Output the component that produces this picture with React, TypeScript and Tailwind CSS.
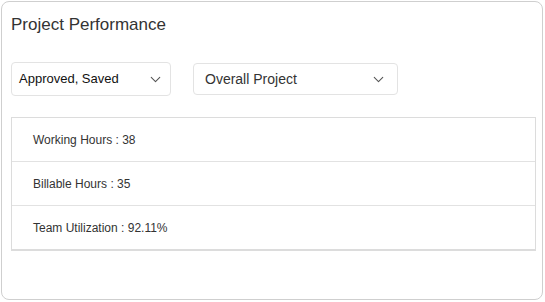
import { ChevronDown } from "lucide-react";

type Metric = { label: string; value: string };

const METRICS: Metric[] = [
	{ label: "Working Hours", value: "38" },
	{ label: "Billable Hours", value: "35" },
	{ label: "Team Utilization", value: "92.11%" },
];

function Dropdown({
	text,
	className,
	textClassName,
}: {
	text: string;
	className: string;
	textClassName: string;
}) {
	return (
		<div
			className={`flex items-center justify-between rounded-[4px] border border-[#e3e3e3] bg-white ${className}`}
		>
			<span className={textClassName}>{text}</span>
			<ChevronDown size={17} strokeWidth={1.5} className="text-[#555]" />
		</div>
	);
}

export default function App() {
	return (
		<div
			className="h-[302px] w-[545px] bg-white p-[1px]"
			style={{ fontFamily: '"Liberation Sans", Arial, sans-serif' }}
		>
			<div className="flex h-[299px] w-[542px] flex-col rounded-[8px] border border-[#cfcfcf] bg-white px-[9px]">
				<div className="pt-[13px] text-[17px] leading-[20px] text-[#333]">
					Project Performance
				</div>
				<div className="mt-[27px] flex items-start gap-[22px]">
					<Dropdown
						text="Approved, Saved"
						className="h-[34px] w-[160px] pl-[7px] pr-[6px]"
						textClassName="text-[13px] text-[#111]"
					/>
					<Dropdown
						text="Overall Project"
						className="mt-[1px] h-[32px] w-[205px] pl-[11px] pr-[10px]"
						textClassName="text-[14px] text-[#333]"
					/>
				</div>
				<div className="mt-[21px] w-[525px] border-x border-t border-[#dcdcdc]">
					{METRICS.map((m, i) => (
						<div
							key={m.label}
							className={`flex items-center pl-[21px] text-[12px] text-[#333] ${
								i === METRICS.length - 1
									? "h-[45px] border-b-2 border-[#dcdcdc]"
									: "h-[44px] border-b border-[#e2e2e2]"
							}`}
						>
							{m.label} : {m.value}
						</div>
					))}
				</div>
			</div>
		</div>
	);
}
